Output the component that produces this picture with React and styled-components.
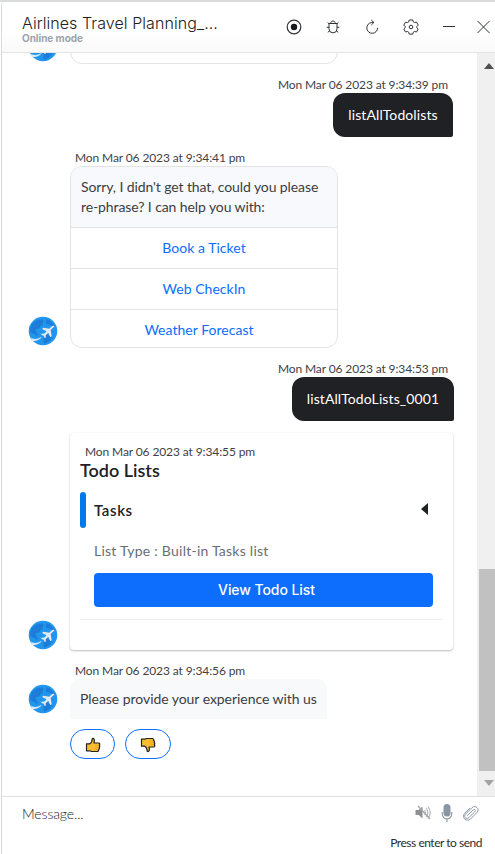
import React from "react";
import styled, { createGlobalStyle } from "styled-components";

const Global = createGlobalStyle`
  * { box-sizing: border-box; }
  html, body { margin: 0; padding: 0; background: #fff; overflow: hidden; }
  button, h1, h2, h3, p { margin: 0; padding: 0; font: inherit; border: 0; background: none; }
`;

const Window = styled.div`
  width: 495px;
  height: 854px;
  padding-left: 1px;
  display: flex;
  flex-direction: column;
  overflow: hidden;
  background: #fff;
  border-top: 2px solid #dadcdc;
  font-family: "Lato", sans-serif;
  color: #202124;
`;
const Panel = styled.div`
  flex: 1;
  min-height: 0;
  display: flex;
  flex-direction: column;
  border-left: 1px solid #d9dadc;
  border-top-left-radius: 4px;
`;
const Header = styled.header`
  height: 51px;
  flex: none;
  display: flex;
  justify-content: space-between;
  border-bottom: 1px solid #e4e5e7;
  background: linear-gradient(#fff 60%, #fafafa);
  border-top-left-radius: 4px;
`;
const Heading = styled.div`
  padding: 11px 0 0 20px;
  font-family: "Inter", sans-serif;
`;
const Title = styled.h1`
  font-size: 16px;
  line-height: 20px;
  font-weight: 350;
  letter-spacing: 0.07px;
  white-space: nowrap;
`;
const Mode = styled.p`
  font-size: 10px;
  line-height: 10px;
  font-weight: 700;
  letter-spacing: -0.05px;
  color: #9ba3ac;
`;
const Tools = styled.div`
  display: flex;
  align-items: flex-start;
  gap: 23px;
  padding: 17px 3px 0 0;
`;
const Tool = styled.button`
  width: 16px;
  height: 16px;
  display: block;
  &:last-child { margin-left: -5px; }
  svg { display: block; overflow: visible; }
`;
const Body = styled.div`
  flex: 1;
  min-height: 0;
  display: flex;
`;
const Messages = styled.main`
  flex: 1;
  display: flex;
  flex-direction: column;
  padding: 0 24px 0 26px;
  overflow: hidden;
`;
const Scrollbar = styled.div`
  width: 18px;
  flex: none;
  display: flex;
  flex-direction: column;
  background: #f0f0f0;
  padding: 10px 0 10px 2px;
  overflow: hidden;
`;
const ScrollArrow = styled.div`
  width: 0;
  height: 0;
  margin-left: 5px;
  border: 5.5px solid transparent;
  border-top-width: ${(p) => (p.$down ? "6px" : 0)};
  border-bottom-width: ${(p) => (p.$down ? 0 : "6px")};
  border-${(p) => (p.$down ? "top" : "bottom")}-color: ${(p) => (p.$down ? "#a3a3a3" : "#505050")};
`;
const Thumb = styled.div`
  height: 202px;
  margin: auto 0 9px;
  background: #c1c1c1;
`;
const Stamp = styled.div`
  height: 16px;
  font-size: 12px;
  line-height: 16px;
  font-weight: 400;
  letter-spacing: -0.11px;
  white-space: nowrap;
  padding: ${(p) => (p.$mine ? "0 5px 0 0" : "0 0 0 5px")};
  text-align: ${(p) => (p.$mine ? "right" : "left")};
  color: #3f4145;
`;
const Mine = styled.div`
  display: flex;
  flex-direction: column;
  align-items: flex-end;
  margin-top: 13px;
`;
const MyBubble = styled.div`
  height: 44px;
  width: ${(p) => p.$w}px;
  margin-right: ${(p) => p.$mr || 0}px;
  border-radius: 12px 12px 2px 12px;
  background: #202124;
  color: #fff;
  font-size: 14px;
  line-height: 44px;
  letter-spacing: 0.1px;
  text-align: center;
`;
const BotRow = styled.div`
  display: flex;
  align-items: flex-end;
  gap: 12px;
  margin-top: ${(p) => p.$mt}px;
`;
const AvatarBox = styled.div`
  width: 30px;
  height: 30px;
  flex: none;
  margin-bottom: ${(p) => p.$mb || 0}px;
  svg { display: block; }
`;
const Stack = styled.div`
  flex: ${(p) => (p.$fill ? 1 : "none")};
`;
const PreviousBubble = styled.div`
  width: 268px;
  height: 30px;
  border: 1px solid #e4e5e7;
  border-radius: 12px;
`;
const Clip = styled.div`
  height: 11px;
  flex: none;
  display: flex;
  align-items: flex-end;
  overflow: hidden;
`;
const Menu = styled.div`
  width: 268px;
  height: 182px;
  border: 1px solid #e1e3e5;
  border-radius: 12px;
  overflow: hidden;
`;
const Prompt = styled.p`
  height: 60px;
  padding: 10px 10px 0;
  background: #f8f9fc;
  font-size: 14px;
  line-height: 20px;
  letter-spacing: -0.1px;
  color: #3c3d40;
`;
const Choice = styled.button`
  display: block;
  width: 100%;
  height: 41px;
  padding-right: ${(p) => p.$shift || 0}px;
  border-top: 1px solid #e1e3e5;
  font-size: 14px;
  line-height: 40px;
  letter-spacing: 0.03px;
  text-align: center;
  color: #0d6efd;
`;
const Card = styled.section`
  height: 217px;
  padding: 11px 10px 0;
  border-radius: 4px;
  background: #fff;
  box-shadow: 0 1px 2px rgba(32, 33, 36, 0.28), 0 0 1px rgba(32, 33, 36, 0.12);
`;
const CardTitle = styled.h2`
  font-size: 18px;
  line-height: 20px;
  font-weight: 600;
`;
const TaskHead = styled.div`
  display: flex;
  align-items: center;
  height: 36px;
  margin-top: 12px;
`;
const Accent = styled.span`
  width: 6px;
  height: 36px;
  border-radius: 3px;
  background: #0078e8;
`;
const TaskName = styled.h3`
  flex: 1;
  padding-left: 8px;
  font-size: 15px;
  line-height: 20px;
  font-weight: 600;
  letter-spacing: 0.6px;
`;
const Collapse = styled.span`
  border: 6.5px solid transparent;
  border-right: 7px solid #202124;
  border-left: 0;
  margin: -3px 15px 0 0;
`;
const Details = styled.div`
  padding: 13px 10px 12px 14px;
  border-bottom: 1px solid #eceef0;
`;
const DetailText = styled.p`
  font-size: 14px;
  line-height: 20px;
  letter-spacing: 0.24px;
  color: #6a6e73;
`;
const Primary = styled.button`
  display: block;
  width: 100%;
  height: 34px;
  margin-top: 12px;
  padding-left: 6px;
  border-radius: 4px;
  background: #0d6efd;
  color: #fff;
  font-family: "Inter", sans-serif;
  font-size: 14px;
  line-height: 34px;
  font-weight: 500;
  letter-spacing: -0.07px;
  text-align: center;
`;
const Reply = styled.div`
  width: 257px;
  height: 40px;
  padding-left: 10px;
  border-radius: 10px 10px 0 0;
  background: #f8f9fb;
  font-size: 14px;
  line-height: 40px;
  letter-spacing: -0.05px;
  white-space: nowrap;
  color: #3c3d40;
`;
const Votes = styled.div`
  display: flex;
  gap: 10px;
  padding: 10px 0 0 42px;
`;
const Vote = styled.button`
  width: ${(p) => p.$w}px;
  height: 30px;
  display: flex;
  align-items: center;
  justify-content: center;
  border: 1px solid #0d6efd;
  border-radius: 15px;
  background: #fff;
  svg { transform: ${(p) => (p.$down ? "scaleY(-1)" : "none")}; margin-top: 2px; }
`;
const Footer = styled.footer`
  height: 58px;
  flex: none;
  display: grid;
  grid-template-columns: 1fr auto;
  grid-template-rows: 34px 1fr;
  border-top: 1px solid #dfe1e3;
  padding-left: 20px;
`;
const Placeholder = styled.div`
  font-size: 14px;
  line-height: 34px;
  font-weight: 300;
  letter-spacing: -0.12px;
`;
const InputTools = styled.div`
  display: flex;
  align-items: center;
  padding-right: 15px;
  gap: 9.5px;
  height: 31px;
`;
const Hint = styled.div`
  grid-column: 1 / 3;
  padding-right: 13px;
  text-align: right;
  font-size: 12px;
  line-height: 24px;
  letter-spacing: -0.48px;
  color: #2c2d30;
`;

const Avatar = ({ mb }) => (
  <AvatarBox $mb={mb}>
    <svg width="30" height="30" viewBox="0 0 30 30">
      <circle cx="15" cy="15" r="14.3" fill="#2196ee" />
      <path d="M3 10c3-6 8-7 12-6 2 3-2 3 0 5-4 1-3 5-7 4-2 3 3 4 2 7-3-1-5-3-8-4zM18 3c4 1 7 4 9 8l-4-2-5-1zM16 19c3-1 6 0 8 3-3 4-6 6-9 5 2-3-1-4 1-8z" fill="#1d73d2" opacity=".75" />
      <path d="M1.500 21.500c5 2.500 9 1.500 12.500-1-2 3.600-6 5-10.500 4.200z" fill="#d9e9f5" />
      <path transform="translate(.8 .5)" d="M25.500 9.500c-1-.8-2 0-3 .8l-2 1.900-6-1-1.300 1.200 4.600 2.300-2.500 2.500-2.200-.2-1 .9 2.700 1.300 1.200 2.600 1-.9-.1-2.200 2.500-2.400 2.200 4.500 1.200-1.300-.9-6 1.900-2c.9-.8 2-1.400 1.700-2z" fill="#e6ebef" />
    </svg>
  </AvatarBox>
);

const line = { fill: "none", stroke: "#303236", strokeWidth: 1 };
const RecordIcon = () => (
  <svg width="16" height="16" viewBox="0 0 16 16">
    <circle cx="8" cy="8" r="6.800" {...line} strokeWidth="1.200" /><circle cx="8" cy="8" r="3.200" fill="#17181a" />
  </svg>
);
const BugIcon = () => (
  <svg width="16" height="16" viewBox="0 0 16 16" {...line}>
    <path d="M5.700 4.500c0-3.300 4.600-3.300 4.600 0M4 4.500h8v5.300a4 4 0 0 1-8 0zM4 4.800 2.600 3.500M12 4.800l1.400-1.300M4 8.300H1.700M12 8.300h2.300M4.700 11.800l-1.900 1.500M11.300 11.800l1.900 1.500" />
  </svg>
);
const ReloadIcon = () => (
  <svg width="16" height="16" viewBox="0 0 16 16" {...line}>
    <path d="M9.500 3.500H7.800a5.400 5.400 0 1 0 5.800 5.300M7.300 1l2.600 2.500L7.300 6" />
  </svg>
);
const GearIcon = () => (
  <svg width="16" height="16" viewBox="0 0 16 16" {...line}>
    <path strokeLinejoin="round" d="M6.200 1h3.600l.5 1.900 1.200.7 2-.5 1.700 3-1.400 1.400v1.200l1.400 1.300-1.700 3-2-.5-1.200.7-.5 1.900H6.200l-.5-1.900-1.200-.7-2 .5-1.700-3 1.400-1.300V7.500L.8 6.100l1.700-3 2 .5 1.200-.7z" />
    <circle cx="8" cy="8" r="1.800" />
  </svg>
);
const MinimizeIcon = () => (
  <svg width="16" height="16" viewBox="0 0 16 16" {...line}><path d="M1 7.500h12" /></svg>
);
const CloseIcon = () => (
  <svg width="16" height="16" viewBox="0 0 16 16" {...line}><path d="m1.500 2 12 12M13.500 2l-12 12" /></svg>
);
const Thumbs = () => (
  <svg width="16" height="16" viewBox="0 0 16 16">
    <path d="M1.500 6.800h3.300c1.900-1 2.300-2.800 2.500-5.300 2-.4 2.600 1.500 1.700 4.500h4.500c1.500 0 1.600 1.800.7 2.300.9.600.6 1.800 0 2.100.5.700.2 1.700-.5 2 .2 1.100-.4 2.100-1.700 2.100H6.500l-1.500-.7H1.500z" fill="#fbbd30" stroke="#242323" strokeWidth="1.200" strokeLinejoin="round" />
    <path d="M9.800 8.300h4M9.800 10.400h4M9.800 12.400h3.300" stroke="#d99a22" strokeWidth=".5" />
  </svg>
);
const MutedIcon = () => (
  <svg width="16" height="16" viewBox="0 0 16 16">
    <path d="M.5 5h3.300L7.500 1.500v12L3.800 10H.5z" fill="#8d8f91" />
    <path d="M9.500 5q2 2.500 0 5M11.200 3q3.400 4.500 0 9M13 1.500q4.500 6 0 12" fill="none" stroke="#b5b7b9" strokeWidth="1.200" />
    <path d="m3 1 12 13" stroke="#a4a6a8" strokeWidth="1.400" />
  </svg>
);
const MicIcon = () => (
  <svg width="12" height="18" viewBox="0 0 12 18">
    <rect x="2.500" y="0" width="7" height="12.500" rx="3.500" fill="#8a96a3" />
    <path d="M1.300 8v2.200a4.700 4.700 0 0 0 9.400 0V8M6 14.500V18" fill="none" stroke="#8a96a3" strokeWidth="1.100" />
  </svg>
);
const ClipIcon = () => (
  <svg width="18" height="18" viewBox="0 0 18 18">
    <path d="M5.200 11.800 11 6c1.500-1.500 3.200.2 1.800 1.700L7 13.500c-2.500 2.400-6-.7-3.500-3.300l6.700-6.700c3-2.800 8 1.500 5 4.800l-6.700 6.700c-3.700 3.500-9.400-1.300-6-5.500L8 4" fill="none" stroke="#8a96a3" strokeWidth="1" />
  </svg>
);

const tools = [RecordIcon, BugIcon, ReloadIcon, GearIcon, MinimizeIcon, CloseIcon];

export default function App() {
  return (
    <Window>
      <Global />
      <Panel>
        <Header>
          <Heading>
            <Title>Airlines Travel Planning_...</Title>
            <Mode>Online mode</Mode>
          </Heading>
          <Tools>{tools.map((Icon, i) => <Tool key={i}><Icon /></Tool>)}</Tools>
        </Header>
        <Body>
          <Messages>
            <Clip>
              <BotRow $mt={0}><Avatar mb={2} /><PreviousBubble /></BotRow>
            </Clip>
            <Mine>
              <Stamp $mine>Mon Mar 06 2023 at 9:34:39 pm</Stamp>
              <MyBubble $w={120}>listAllTodolists</MyBubble>
            </Mine>
            <BotRow $mt={13}>
              <Avatar mb={2} />
              <Stack>
                <Stamp>Mon Mar 06 2023 at 9:34:41 pm</Stamp>
                <Menu>
                  <Prompt>Sorry, I didn't get that, could you please re-phrase? I can help you with:</Prompt>
                  <Choice>Book a Ticket</Choice>
                  <Choice>Web CheckIn</Choice>
                  <Choice $shift={10}>Weather Forecast</Choice>
                </Menu>
              </Stack>
            </BotRow>
            <Mine>
              <Stamp $mine>Mon Mar 06 2023 at 9:34:53 pm</Stamp>
              <MyBubble $w={162} $mr={-1}>listAllTodoLists_0001</MyBubble>
            </Mine>
            <BotRow $mt={12}>
              <Avatar />
              <Stack $fill>
                <Card>
                  <Stamp>Mon Mar 06 2023 at 9:34:55 pm</Stamp>
                  <CardTitle>Todo Lists</CardTitle>
                  <TaskHead><Accent /><TaskName>Tasks</TaskName><Collapse /></TaskHead>
                  <Details>
                    <DetailText>List Type : Built-in Tasks list</DetailText>
                    <Primary>View Todo List</Primary>
                  </Details>
                </Card>
              </Stack>
            </BotRow>
            <BotRow $mt={13}>
              <Avatar mb={5} />
              <Stack>
                <Stamp>Mon Mar 06 2023 at 9:34:56 pm</Stamp>
                <Reply>Please provide your experience with us</Reply>
              </Stack>
            </BotRow>
            <Votes>
              <Vote $w={45}><Thumbs /></Vote>
              <Vote $w={46} $down><Thumbs /></Vote>
            </Votes>
          </Messages>
          <Scrollbar><ScrollArrow /><Thumb /><ScrollArrow $down /></Scrollbar>
        </Body>
        <Footer>
          <Placeholder>Message...</Placeholder>
          <InputTools><MutedIcon /><MicIcon /><ClipIcon /></InputTools>
          <Hint>Press enter to send</Hint>
        </Footer>
      </Panel>
    </Window>
  );
}
